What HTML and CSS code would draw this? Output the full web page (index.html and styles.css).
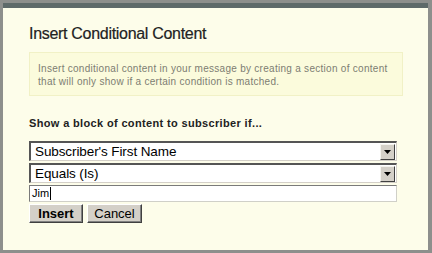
FILE: index.html
```html
<!DOCTYPE html>
<html>
<head>
<meta charset="utf-8">
<link rel="stylesheet" href="styles.css">
</head>
<body>
<div class="frame">
  <div class="dialog">
    <h1 class="title">Insert Conditional Content</h1>
    <div class="info">Insert conditional content in your message by creating a section of content<br>that will only show if a certain condition is matched.</div>
    <h2 class="label">Show a block of content to subscriber if...</h2>
    <div class="select">
      <span class="select-text">Subscriber's First Name</span>
      <span class="arrow"><svg width="7" height="4" viewBox="0 0 7 4"><path d="M0 0H7L3.5 4Z" fill="#000"/></svg></span>
    </div>
    <div class="select">
      <span class="select-text">Equals (Is)</span>
      <span class="arrow"><svg width="7" height="4" viewBox="0 0 7 4"><path d="M0 0H7L3.5 4Z" fill="#000"/></svg></span>
    </div>
    <div class="input"><span class="input-text">Jim</span><span class="caret"></span></div>
    <div class="buttons">
      <div class="btn btn-bold">Insert</div>
      <div class="btn">Cancel</div>
    </div>
  </div>
</div>
</body>
</html>
```
FILE: styles.css
```css
html, body {
  margin: 0;
  padding: 0;
}
body {
  width: 432px;
  height: 253px;
  overflow: hidden;
  font-family: "Liberation Sans", Arial, sans-serif;
}
.frame {
  width: 432px;
  height: 253px;
  box-sizing: border-box;
  background: #8d8f8c;
  padding: 3px 4px 3px 3px;
}
.dialog {
  height: 247px;
  box-sizing: border-box;
  background: #fdfdea;
  border-top: 5px solid #5e6a69;
  padding: 16px 0 0 26px;
}
.title {
  margin: 0;
  font-size: 16px;
  line-height: 20px;
  font-weight: normal;
  letter-spacing: -0.3px;
  color: #222;
  -webkit-text-stroke: 0.2px #222;
}
.info {
  margin-top: 8px;
  width: 374px;
  box-sizing: border-box;
  height: 44px;
  background: #fbfbdc;
  border: 1px solid #f1f1c6;
  padding: 9px 0 0 8px;
  font-size: 10px;
  line-height: 13px;
  letter-spacing: 0.28px;
  color: #7d7d72;
}
.label {
  margin: 20px 0 0 0;
  font-size: 11px;
  line-height: 15px;
  font-weight: bold;
  letter-spacing: 0.35px;
  color: #222;
}
.select {
  margin-top: 10px;
  width: 368px;
  height: 20px;
  box-sizing: border-box;
  background: #fff;
  border-top: 2px solid #555;
  border-left: 2px solid #555;
  border-right: 1px solid #d4d0c8;
  border-bottom: 1px solid #d4d0c8;
  display: flex;
  align-items: center;
  justify-content: space-between;
}
.select + .select {
  margin-top: 2px;
}
.select-text {
  padding-left: 4px;
  font-size: 13.5px;
  line-height: 17px;
  letter-spacing: -0.1px;
  color: #000;
}
.arrow {
  width: 15px;
  height: 16px;
  box-sizing: border-box;
  margin-right: 1px;
  background: #d4d0c8;
  border-top: 1px solid #f4f3ee;
  border-left: 1px solid #f4f3ee;
  border-right: 1px solid #404040;
  border-bottom: 1px solid #404040;
  display: flex;
  align-items: center;
  justify-content: center;
}
.arrow svg {
  display: block;
}
.input {
  margin-top: 2px;
  width: 368px;
  height: 17px;
  box-sizing: border-box;
  background: #fff;
  border-top: 1px solid #7a7a7a;
  border-left: 1px solid #7a7a7a;
  border-right: 1px solid #d0d0c8;
  border-bottom: 1px solid #d0d0c8;
  display: flex;
  align-items: center;
  padding-left: 2px;
}
.input-text {
  font-size: 11px;
  line-height: 13px;
  color: #000;
}
.caret {
  width: 1px;
  height: 13px;
  background: #000;
  margin-left: 1px;
}
.buttons {
  margin-top: 2px;
  display: flex;
  gap: 4px;
}
.btn {
  height: 19px;
  box-sizing: border-box;
  background: #d4d0c8;
  border-top: 1px solid #fff;
  border-left: 1px solid #fff;
  border-right: 1px solid #404040;
  border-bottom: 1px solid #404040;
  box-shadow: inset -1px -1px 0 #808080;
  font-size: 13px;
  line-height: 17px;
  color: #000;
  text-align: center;
  width: 54px;
}
.btn + .btn {
  width: 55px;
}
.btn-bold {
  font-weight: bold;
}
```
